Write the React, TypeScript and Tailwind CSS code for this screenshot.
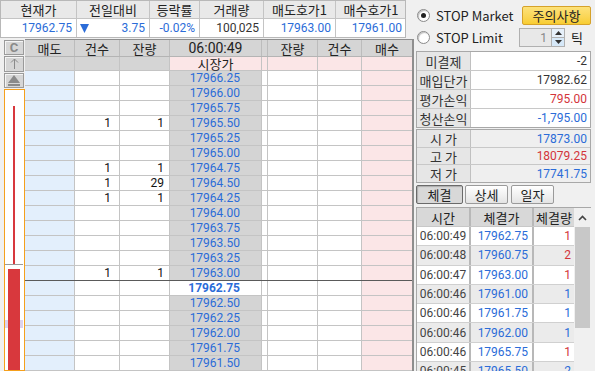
import React from 'react';

const BLUE = 'text-[#2b6cd8]';
const RED = 'text-[#d3343a]';
const NUM = "font-['Roboto',sans-serif]";

const book = [
  { price: '17966.25' },
  { price: '17966.00' },
  { price: '17965.75' },
  { price: '17965.50', cnt: '1', qty: '1' },
  { price: '17965.25' },
  { price: '17965.00' },
  { price: '17964.75', cnt: '1', qty: '1' },
  { price: '17964.50', cnt: '1', qty: '29' },
  { price: '17964.25', cnt: '1', qty: '1' },
  { price: '17964.00' },
  { price: '17963.75' },
  { price: '17963.50' },
  { price: '17963.25' },
  { price: '17963.00', cnt: '1', qty: '1' },
  { price: '17962.75', current: true },
  { price: '17962.50' },
  { price: '17962.25' },
  { price: '17962.00' },
  { price: '17961.75' },
  { price: '17961.50' },
];

const ticks = [
  { t: '06:00:49', p: '17962.75', q: '1', up: true },
  { t: '06:00:48', p: '17960.75', q: '2', up: true },
  { t: '06:00:47', p: '17963.00', q: '1', up: true },
  { t: '06:00:46', p: '17961.00', q: '1', up: false },
  { t: '06:00:46', p: '17961.75', q: '1', up: false },
  { t: '06:00:46', p: '17962.00', q: '1', up: false },
  { t: '06:00:46', p: '17965.75', q: '1', up: true },
  { t: '06:00:45', p: '17965.50', q: '2', up: false },
];

const bookCols = 'grid grid-cols-[50px_45px_50px_92px_6px_50px_44px_50px]';

function Radio({ on }: { on?: boolean }) {
  return (
    <span className="flex h-[13px] w-[13px] items-center justify-center rounded-full border border-[#8a8a8a] bg-white shadow-[inset_1px_1px_1px_rgba(0,0,0,0.25)]">
      {on && <span className="h-[5px] w-[5px] rounded-full bg-[#222]" />}
    </span>
  );
}

function TopTable() {
  const heads = ['현재가', '전일대비', '등락률', '거래량', '매도호가1', '매수호가1'];
  return (
    <div className="w-[406px] border border-[#b8b8b8] bg-white">
      <div className="grid h-[18px] grid-cols-[76px_73px_50px_64px_72px_70px] border-b border-[#c4c4c4] bg-[#e9e9e9] text-[13px] text-[#222]">
        {heads.map((h) => (
          <div key={h} className="flex items-center justify-center border-r border-[#c4c4c4] leading-none last:border-r-0">
            {h}
          </div>
        ))}
      </div>
      <div className={`grid h-[18px] grid-cols-[76px_73px_50px_64px_72px_70px] text-[12px] leading-none ${NUM}`}>
        <div className={`flex items-center justify-end border-r border-[#c4c4c4] pr-[4px] ${BLUE}`}>17962.75</div>
        <div className={`flex items-center justify-between border-r border-[#c4c4c4] pl-[3px] pr-[4px] ${BLUE}`}>
          <svg width="9" height="9" viewBox="0 0 9 9">
            <path d="M0 0 H9 L4.5 9 Z" fill="#2b6cd8" />
          </svg>
          <span>3.75</span>
        </div>
        <div className={`flex items-center justify-end border-r border-[#c4c4c4] pr-[4px] ${BLUE}`}>-0.02%</div>
        <div className="flex items-center justify-end border-r border-[#c4c4c4] pr-[4px] text-[#333]">100,025</div>
        <div className={`flex items-center justify-end border-r border-[#c4c4c4] pr-[4px] ${BLUE}`}>17963.00</div>
        <div className={`flex items-center justify-end pr-[4px] ${BLUE}`}>17961.00</div>
      </div>
    </div>
  );
}

function SideButtons() {
  const btn =
    'flex h-[17px] w-[20px] items-center justify-center border border-[#9a9a9a] bg-[#d6d6d6] shadow-[inset_1px_1px_0_#f4f4f4] text-[#8a8a8a] leading-none';
  return (
    <div className="flex w-[25px] flex-col pl-[4px] pt-[1px]">
      <div className={`${btn} text-[13px] font-bold ${NUM}`}>C</div>
      <div className={`${btn} mt-[1px]`}>
        <svg width="9" height="12" viewBox="0 0 9 12">
          <path d="M4.5 1 V11 M1 4.5 L4.5 1 L8 4.5" stroke="#8a8a8a" strokeWidth="1" fill="none" />
        </svg>
      </div>
      <div className={`${btn} mt-[1px]`}>
        <svg width="12" height="11" viewBox="0 0 12 11">
          <path d="M6 0 L12 8 H0 Z" fill="#8a8a8a" />
          <rect x="0" y="9" width="12" height="2" fill="#8a8a8a" />
        </svg>
      </div>
      <div className="mt-[1px] flex-1 border border-[#f5a01c] bg-white">
        <svg width="18" height="280" viewBox="0 0 18 280" className="block">
          <rect x="0" y="230" width="18" height="8" fill="#ddd2ee" />
          <rect x="8" y="16" width="2" height="158" fill="#d8383d" />
          <rect x="0" y="174" width="18" height="1" fill="#9a9a9a" />
          <rect x="3" y="179" width="12" height="101" fill="#d8383d" />
        </svg>
      </div>
    </div>
  );
}

function OrderBook() {
  const heads = ['매도', '건수', '잔량', '06:00:49', '', '잔량', '건수', '매수'];
  return (
    <div className="flex flex-1 flex-col border-r-2 border-t border-[#8e8e8e] bg-white">
      <div className={`${bookCols} h-[19px] border-b border-[#b4b4b4] bg-[#d5d5d5] text-[13px] text-[#222]`}>
        {heads.map((h, i) => (
          <div
            key={i}
            className={`flex items-center justify-center border-r border-[#bcbcbc] leading-none last:border-r-0 ${
              i === 3 ? `${NUM} text-[14px]` : ''
            }`}
          >
            {h}
          </div>
        ))}
      </div>
      <div className={`${bookCols} h-[15px] border-b border-[#c4c4c4] text-[13px]`}>
        <div className="border-r border-[#c4c4c4] bg-[#d5d5d5]" />
        <div className="border-r border-[#c4c4c4] bg-[#d5d5d5]" />
        <div className="border-r border-[#c4c4c4] bg-[#d5d5d5]" />
        <div className="flex items-center justify-center border-r border-[#c4c4c4] bg-[#fbe6e7] leading-none text-[#222]">
          시장가
        </div>
        <div className="border-r border-[#c4c4c4] bg-[#fbe6e7]" />
        <div className="border-r border-[#c4c4c4] bg-[#fbe6e7]" />
        <div className="border-r border-[#c4c4c4] bg-[#fbe6e7]" />
        <div className="bg-[#fbe6e7]" />
      </div>
      {book.map((r, i) => (
        <div
          key={r.price}
          className={`${bookCols} h-[15px] shrink-0 border-b text-[12px] leading-none ${NUM} ${
            i === 13 ? 'border-[#5a5a5a]' : 'border-[#c4c4c4]'
          }`}
        >
          <div className="border-r border-[#c4c4c4] bg-[#e3effc]" />
          <div className="flex items-center justify-end border-r border-[#c4c4c4] pr-[8px] text-[#111]">{r.cnt}</div>
          <div className="flex items-center justify-end border-r border-[#c4c4c4] pr-[5px] text-[#111]">{r.qty}</div>
          <div
            className={`flex items-center justify-end border-r border-[#c4c4c4] pr-[21px] ${BLUE} ${
              r.current ? 'bg-white font-bold' : 'bg-[#d4d4d4]'
            }`}
          >
            {r.price}
          </div>
          <div className="border-r border-[#c4c4c4]" />
          <div className="border-r border-[#c4c4c4]" />
          <div className="border-r border-[#c4c4c4]" />
          <div className="bg-[#fbe6e7]" />
        </div>
      ))}
    </div>
  );
}

function InfoRow({
  label,
  value,
  color,
  white,
  h,
}: {
  label: string;
  value: string;
  color: string;
  white?: boolean;
  h: string;
}) {
  return (
    <div className={`flex ${h} border-b border-[#c8c8c8] last:border-b-0`}>
      <div className="flex w-[54px] items-center justify-center border-r border-[#c0c0c0] bg-[#e6e6e6] text-[13px] leading-none text-[#333]">
        {label}
      </div>
      <div
        className={`flex flex-1 items-center justify-end pr-[3px] text-[12px] leading-none ${NUM} ${color} ${
          white ? 'bg-white' : 'bg-[#efefef]'
        }`}
      >
        {value}
      </div>
    </div>
  );
}

function RightPanel() {
  return (
    <div className="flex flex-1 flex-col pl-[2px] pr-[5px]">
      <div className="mt-[5px] flex h-[20px] items-center">
        <span className="ml-[1px]">
          <Radio on />
        </span>
        <span className="ml-[6px] text-[13px] leading-none text-[#222]">STOP Market</span>
        <div className="ml-auto flex h-[19px] w-[69px] items-center justify-center rounded-[2px] border border-[#d6a22a] bg-gradient-to-b from-[#fde27a] to-[#f8cd30] text-[13px] leading-none text-[#222]">
          주의사항
        </div>
      </div>
      <div className="mt-[3px] flex h-[19px] items-center">
        <span className="ml-[1px]">
          <Radio />
        </span>
        <span className="ml-[6px] text-[13px] leading-none text-[#222]">STOP Limit</span>
        <div className={`ml-auto flex h-[19px] w-[33px] items-center justify-end border border-[#b0b0b0] bg-[#e8e8e8] pr-[4px] text-[12px] leading-none text-[#888] ${NUM}`}>
          1
        </div>
        <div className="flex h-[19px] w-[13px] flex-col border border-l-0 border-[#b0b0b0]">
          <div className="flex flex-1 items-center justify-center bg-[#e6f0fa]">
            <svg width="7" height="4" viewBox="0 0 7 4">
              <path d="M0 4 L3.5 0 L7 4 Z" fill="#333" />
            </svg>
          </div>
          <div className="flex flex-1 items-center justify-center border-t border-[#b0b0b0] bg-[#d6e8f8]">
            <svg width="7" height="4" viewBox="0 0 7 4">
              <path d="M0 0 L3.5 4 L7 0 Z" fill="#333" />
            </svg>
          </div>
        </div>
        <span className="ml-[6px] mr-[8px] text-[13px] leading-none text-[#222]">틱</span>
      </div>
      <div className="mt-[4px] border border-[#a8a8a8]">
        <InfoRow h="h-[19px]" label="미결제" value="-2" color="text-[#333]" white />
        <InfoRow h="h-[19px]" label="매입단가" value="17982.62" color="text-[#333]" white />
        <InfoRow h="h-[19px]" label="평가손익" value="795.00" color={RED} white />
        <InfoRow h="h-[18px]" label="청산손익" value="-1,795.00" color={BLUE} white />
      </div>
      <div className="mt-[1px] flex flex-col border border-[#a8a8a8]">
        <InfoRow h="h-[18px]" label="시 가" value="17873.00" color={BLUE} />
        <InfoRow h="h-[17px]" label="고 가" value="18079.25" color={RED} />
        <InfoRow h="h-[17px]" label="저 가" value="17741.75" color={BLUE} />
      </div>
      <div className="mt-[2px] flex gap-[2px]">
        <div className="flex h-[19px] w-[47px] items-center justify-center rounded-[2px] border border-[#6a6a6a] bg-[#d8d8d8] text-[13px] leading-none text-[#222] shadow-[inset_1px_1px_1px_rgba(0,0,0,0.2)]">
          체결
        </div>
        <div className="flex h-[19px] w-[43px] items-center justify-center rounded-[2px] border border-[#9a9a9a] bg-gradient-to-b from-white to-[#e4e4e4] text-[13px] leading-none text-[#222]">
          상세
        </div>
        <div className="ml-[1px] flex h-[19px] w-[43px] items-center justify-center rounded-[2px] border border-[#9a9a9a] bg-gradient-to-b from-white to-[#e4e4e4] text-[13px] leading-none text-[#222]">
          일자
        </div>
      </div>
      <div className="mt-[3px] flex flex-1 overflow-hidden border-l border-t border-[#a8a8a8]">
        <div className="flex flex-1 flex-col">
          <div className="grid h-[19px] shrink-0 grid-cols-[54px_63px_40px] border-b border-[#c8c8c8] bg-[#d8d8d8] text-[13px] leading-none text-[#222]">
            <div className="flex items-center justify-center border-r-2 border-[#b8b8b8]">시간</div>
            <div className="flex items-center justify-center border-r-2 border-[#b8b8b8]">체결가</div>
            <div className="flex items-center justify-center">체결량</div>
          </div>
          {ticks.map((r, i) => (
            <div
              key={i}
              className={`grid h-[19.3px] shrink-0 grid-cols-[54px_63px_40px] border-b border-[#d0d0d0] text-[12px] leading-none ${NUM} ${
                i % 2 ? 'bg-[#ebebeb]' : 'bg-white'
              }`}
            >
              <div className="flex items-center justify-center border-r-2 border-[#b8b8b8] text-[#444]">{r.t}</div>
              <div className={`flex items-center justify-end border-r-2 border-[#b8b8b8] pr-[4px] ${BLUE}`}>{r.p}</div>
              <div className={`flex items-center justify-end pr-[3px] ${r.up ? RED : BLUE}`}>{r.q}</div>
            </div>
          ))}
        </div>
        <div className="flex w-[17px] flex-col bg-[#f0f0f0]">
          <div className="flex h-[19px] items-center justify-center">
            <svg width="9" height="6" viewBox="0 0 9 6">
              <path d="M1 5 L4.5 1.5 L8 5" stroke="#444" strokeWidth="1.6" fill="none" />
            </svg>
          </div>
          <div className="mx-[1px] h-[101px] bg-[#c8c8c8]" />
        </div>
      </div>
    </div>
  );
}

export default function App() {
  return (
    <div className="flex h-[371px] w-[595px] overflow-hidden bg-[#f0f0f0] font-['Noto_Sans_CJK_KR',sans-serif]">
      <div className="flex w-[414px] flex-col">
        <TopTable />
        <div className="mt-[1px] flex min-h-0 flex-1">
          <SideButtons />
          <OrderBook />
        </div>
      </div>
      <RightPanel />
    </div>
  );
}
